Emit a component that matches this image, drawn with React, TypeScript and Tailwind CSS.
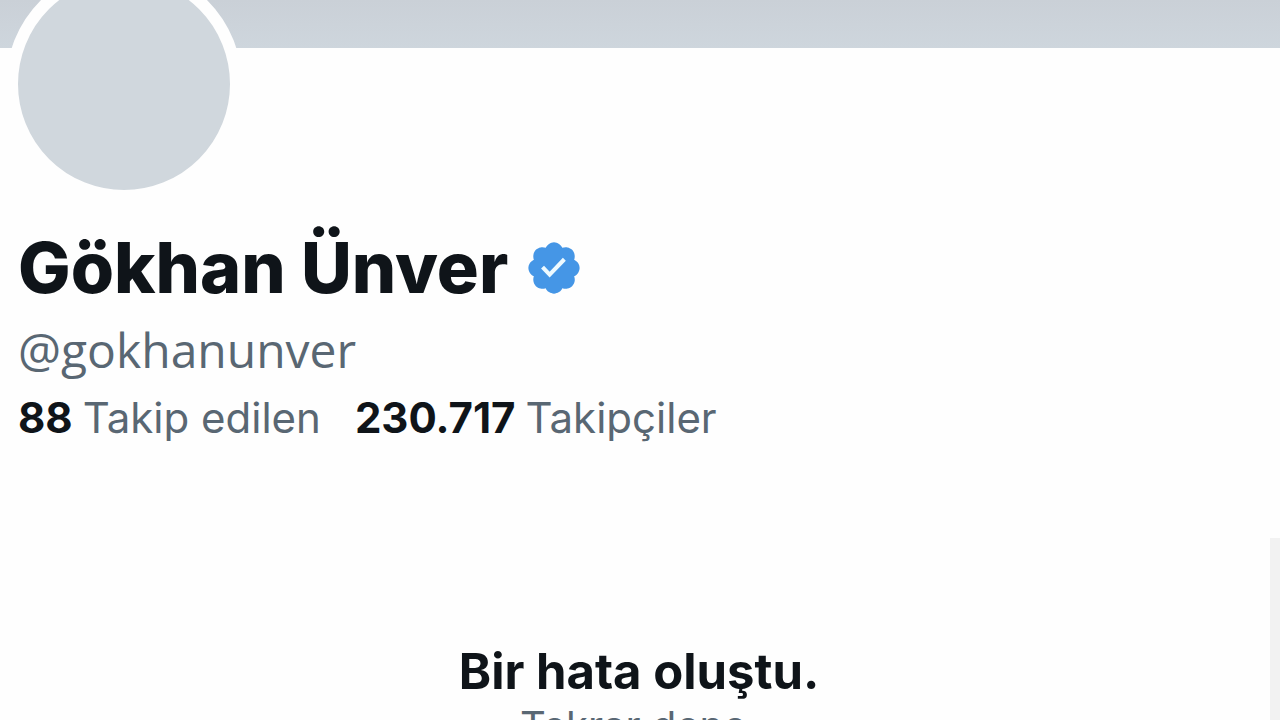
import type { ReactNode } from "react";

function VerifiedBadge() {
  return (
    <svg viewBox="0 0 22 22" className="size-15 shrink-0" role="img" aria-label="Onaylanmış hesap">
      <path
        fill="#4596e6"
        d="M20.396 11c-.018-.646-.215-1.275-.57-1.816-.354-.54-.852-.972-1.438-1.246.223-.607.27-1.264.14-1.897-.131-.634-.437-1.218-.882-1.687-.47-.445-1.053-.75-1.687-.882-.633-.13-1.29-.083-1.897.14-.273-.587-.704-1.086-1.245-1.44S11.647 1.62 11 1.604c-.646.017-1.273.213-1.813.568s-.969.854-1.24 1.44c-.608-.223-1.267-.272-1.902-.14-.635.13-1.22.436-1.69.882-.445.47-.749 1.055-.878 1.688-.13.633-.08 1.29.144 1.896-.587.274-1.087.705-1.443 1.245-.356.54-.555 1.17-.574 1.817.02.647.218 1.276.574 1.817.356.54.856.972 1.443 1.245-.224.606-.274 1.263-.144 1.896.13.634.433 1.218.877 1.688.47.443 1.054.747 1.687.878.633.132 1.29.084 1.897-.136.274.586.705 1.084 1.246 1.439.54.354 1.17.551 1.816.569.647-.016 1.276-.213 1.817-.567s.972-.854 1.245-1.44c.604.239 1.266.296 1.903.164.636-.132 1.22-.447 1.68-.907.46-.46.776-1.044.908-1.681s.075-1.299-.165-1.903c.586-.274 1.084-.705 1.439-1.246.354-.54.551-1.17.569-1.816z"
      />
      <path fill="none" stroke="#eefaff" strokeWidth="1.5" d="M6.8 10.7 9.4 13.4 14.8 7.8" />
    </svg>
  );
}

function Stat({ value, children }: { value: string; children: ReactNode }) {
  return (
    <a href="#" className="flex items-baseline gap-[10px]">
      <span className="font-bold text-[#0f1419]">{value}</span>
      <span className="text-[#596773]">{children}</span>
    </a>
  );
}

export default function App() {
  return (
    <div className="flex h-screen flex-col overflow-hidden bg-[#fefefe] font-['Inter',sans-serif]">
      <div className="h-12 shrink-0 bg-linear-to-b from-[#cad0d7] to-[#ced6dd]" />

      <header className="flex flex-col px-[18px]">
        <div className="relative -mt-[82px] -ml-3 size-[236px] rounded-full border-12 border-[#fefefe] bg-[#d0d7dd]" />
        <div className="mt-[26px] flex items-center gap-4">
          <h1 className="text-[70px] leading-20 font-extrabold text-[#0f1419]">Gökhan Ünver</h1>
          <VerifiedBadge />
        </div>
        <p className="mt-[10px] font-['Open_Sans',sans-serif] text-5xl leading-16 text-[#596773]">@gokhanunver</p>
        <nav aria-label="Takip bilgileri" className="mt-1 flex gap-[34px] text-[42px] leading-16">
          <Stat value="88">Takip edilen</Stat>
          <Stat value="230.717">Takipçiler</Stat>
        </nav>
      </header>

      <main className="mt-22 flex grow">
        <section className="grow pt-[102px] pl-2 text-center">
          <h2 className="text-[49px] leading-16 font-bold text-[#0f1419]">Bir hata oluştu.</h2>
          <p className="text-[40px] leading-11 whitespace-nowrap text-[#596773]">Tekrar dene.</p>
        </section>
        <div className="w-[10px] shrink-0 bg-[#f2f2f2]" />
      </main>
    </div>
  );
}
